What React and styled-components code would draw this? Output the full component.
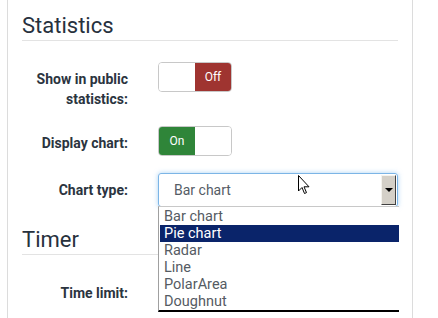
import React from "react";
import styled, { createGlobalStyle } from "styled-components";

const Global = createGlobalStyle`
  body {
    margin: 0;
    background: #fff;
    font-family: Roboto, "Liberation Sans", sans-serif;
  }
`;

const Panel = styled.div`
  position: relative;
  display: flex;
  flex-direction: column;
  margin-left: 7px;
  width: 406px;
  min-height: 318px;
  box-sizing: border-box;
  padding: 10px 14px 0 14px;
  border-left: 1px solid #dcdcdc;
  border-right: 1px solid #dcdcdc;
`;

const Heading = styled.h2`
  margin: 4px 0 21px;
  padding-bottom: 2px;
  font-size: 22px;
  line-height: 24px;
  font-weight: 400;
  color: #27313d;
  border-bottom: 1px solid #e3e3e3;
`;

const Row = styled.div`
  display: flex;
  align-items: flex-start;
  margin-bottom: 17px;
`;

const Label = styled.label`
  width: 106px;
  margin-right: 30px;
  padding-top: 7px;
  text-align: right;
  font-size: 14px;
  line-height: 20px;
  font-weight: 700;
  color: #2b3440;
`;

const Toggle = styled.div`
  display: flex;
  width: 74px;
  height: 30px;
  box-sizing: border-box;
  border: 1px solid #c8c8c8;
  border-radius: 4px;
  overflow: hidden;
`;

const Half = styled.div`
  flex: 1;
  display: flex;
  align-items: center;
  justify-content: center;
  font-size: 12px;
  color: #fff;
  background: ${p => p.$color || "#fff"};
`;

const SelectWrap = styled.div`
  position: relative;
  flex: 1;
`;

const SelectBox = styled.div`
  display: flex;
  align-items: center;
  height: 34px;
  box-sizing: border-box;
  padding-left: 15px;
  border: 1px solid #7cb5e6;
  border-radius: 3px;
  box-shadow: 0 0 5px rgba(102, 175, 233, 0.55);
  font-size: 14px;
  color: #555c66;
`;

const SelectValue = styled.span`
  flex: 1;
`;

const ArrowButton = styled.div`
  display: flex;
  align-items: center;
  justify-content: center;
  width: 15px;
  height: 30px;
  margin-right: 1px;
  box-sizing: border-box;
  background: #d4d0c8;
  border-top: 1px solid #f4f3ee;
  border-left: 1px solid #f4f3ee;
  border-right: 1px solid #404040;
  border-bottom: 1px solid #404040;
  &::after {
    content: "";
    border-left: 4px solid transparent;
    border-right: 4px solid transparent;
    border-top: 4px solid #000;
  }
`;

const List = styled.ul`
  position: absolute;
  left: 0;
  right: -1px;
  top: 33px;
  margin: 0;
  padding: 1px 0 0 0;
  list-style: none;
  background: #fff;
  border-left: 1px solid #a0a0a0;
  border-top: 1px solid #c8c8c8;
  border-bottom: 2px solid #000;
  z-index: 2;
`;

const Option = styled.li`
  height: 17px;
  line-height: 17px;
  margin-left: 1px;
  padding-left: 4px;
  font-size: 14.5px;
  color: ${p => (p.$active ? "#fff" : "#555b63")};
  background: ${p => (p.$active ? "#0a246a" : "transparent")};
`;

const Cursor = styled.svg`
  position: absolute;
  left: 290px;
  top: 175px;
  z-index: 3;
`;

const options = ["Bar chart", "Pie chart", "Radar", "Line", "PolarArea", "Doughnut"];

export default function App() {
  return (
    <>
      <Global />
      <Panel>
        <Heading>Statistics</Heading>
        <Row>
          <Label>Show in public statistics:</Label>
          <Toggle>
            <Half />
            <Half $color="#9f3430">Off</Half>
          </Toggle>
        </Row>
        <Row>
          <Label>Display chart:</Label>
          <Toggle>
            <Half $color="#2f8539">On</Half>
            <Half />
          </Toggle>
        </Row>
        <Row>
          <Label>Chart type:</Label>
          <SelectWrap>
            <SelectBox>
              <SelectValue>Bar chart</SelectValue>
              <ArrowButton />
            </SelectBox>
            <List>
              {options.map(o => (
                <Option key={o} $active={o === "Pie chart"}>
                  {o}
                </Option>
              ))}
            </List>
          </SelectWrap>
        </Row>
        <Heading>Timer</Heading>
        <Row>
          <Label>Time limit:</Label>
        </Row>
        <Cursor width="12" height="20" viewBox="0 0 12 20">
          <path
            d="M0.5 0.5 L0.5 16 L4 12.5 L6.5 18.5 L8.5 17.6 L6 11.8 L11 11.8 Z"
            fill="#fff"
            stroke="#000"
            strokeWidth="1"
            strokeLinejoin="miter"
          />
        </Cursor>
      </Panel>
    </>
  );
}
